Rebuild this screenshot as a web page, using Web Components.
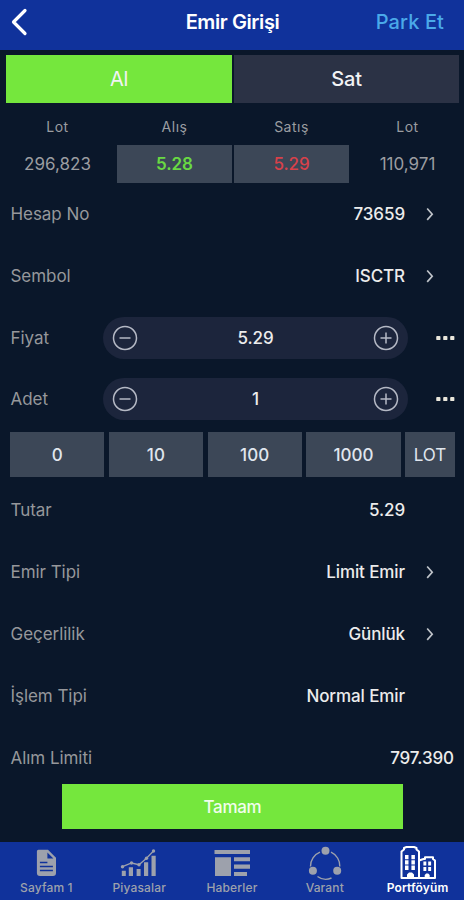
<!DOCTYPE html>
<html lang="tr">
<head>
<meta charset="utf-8">
<title>Emir Girişi</title>
<style>
  body {
    margin: 0;
    background: #0a172a;
    font-family: Inter, "Liberation Sans", sans-serif;
  }
</style>
</head>
<body>
<order-screen></order-screen>

<script>
class AppHeader extends HTMLElement {
  constructor() {
    super();
    this.attachShadow({ mode: "open" });
    this.shadowRoot.innerHTML = `
      <style>
        :host {
          display: grid;
          grid-template-columns: 1fr auto 1fr;
          align-items: center;
          box-sizing: border-box;
          height: 49.5px;
          padding: 0 20px 5px 11px;
          background: #10329b;
          color: #fff;
          font-size: 20px;
        }
        svg { display: block; width: 17px; height: 28px; }
        .title { padding-left: 10px; font-weight: 600; letter-spacing: -0.4px; }
        .action {
          justify-self: end;
          color: #4aa9e9;
          font-weight: 500;
          letter-spacing: 0.1px;
        }
      </style>
      <svg viewBox="0 0 17 28" fill="none" stroke="#fff" stroke-width="3.2" stroke-linecap="round" stroke-linejoin="round"><path d="M14 2.5 2.5 14 14 25.5"/></svg>
      <span class="title"><slot></slot></span>
      <span class="action"><slot name="action"></slot></span>
    `;
  }
}

class SideTabs extends HTMLElement {
  constructor() {
    super();
    this.attachShadow({ mode: "open" });
    this.shadowRoot.innerHTML = `
      <style>
        :host {
          display: grid;
          grid-template-columns: 226px 1fr;
          gap: 2px;
          height: 47.5px;
          margin: 5.5px 5px 0 6px;
        }
        ::slotted(*) {
          display: flex;
          align-items: center;
          justify-content: center;
          background: #2b3245;
          color: #f2f3f5;
          font-size: 20px;
          font-weight: 500;
          letter-spacing: -0.2px;
        }
        ::slotted(.active) {
          background: #75e73d;
          font-weight: 400;
        }
      </style>
      <slot></slot>
    `;
  }
}

class QuoteCell extends HTMLElement {
  constructor() {
    super();
    this.attachShadow({ mode: "open" });
    this.shadowRoot.innerHTML = `
      <style>
        :host {
          display: grid;
          grid-template-rows: 33px 38px;
          color: #9b9da1;
          text-align: center;
        }
        .label { font-size: 14px; line-height: 30px; letter-spacing: 0.5px; }
        .value { font-size: 17px; line-height: 38px; letter-spacing: 0; }
        :host([side]) .value {
          background: #3c4757;
          font-weight: 600;
          letter-spacing: -0.1px;
        }
        :host([side="bid"]) .value { color: #69d943; }
        :host([side="ask"]) .value { color: #d7414a; font-weight: 500; }
      </style>
      <span class="label">${this.getAttribute("label")}</span>
      <span class="value"><slot></slot></span>
    `;
  }
}

class FormRow extends HTMLElement {
  constructor() {
    super();
    this.attachShadow({ mode: "open" });
    this.shadowRoot.innerHTML = `
      <style>
        :host {
          display: grid;
          grid-template-columns: 92.5px 1fr 51px;
          align-items: center;
          box-sizing: border-box;
          height: 50px;
          padding-left: 10.5px;
          padding-right: 8px;
          font-size: 17px;
        }
        .label { color: #96979b; letter-spacing: -0.05px; white-space: nowrap; }
        .value {
          color: #ececec;
          font-weight: 500;
          text-align: right;
          letter-spacing: -0.1px;
        }
        .end { display: flex; }
        svg { display: block; }
        .chevron { width: 10px; height: 16px; margin-left: 20px; }
        .more { width: 22px; height: 8px; margin-left: 27px; }
        :host([wide]) { grid-template-columns: 92.5px 1fr 2px; }
        :host([stepper]) { grid-template-columns: 92.5px 1fr 48px; }
      </style>
      <span class="label">${this.getAttribute("label")}</span>
      <span class="value"><slot></slot></span>
      <span class="end">${this.endIcon()}</span>
    `;
  }
  endIcon() {
    if (this.hasAttribute("link")) {
      return `<svg class="chevron" viewBox="0 0 10 16" fill="none" stroke="#bfc3c9" stroke-width="1.7"><path d="m2.2 2.5 5 5.7-5 5.7"/></svg>`;
    }
    if (this.hasAttribute("stepper")) {
      return `<svg class="more" viewBox="0 0 22 8" fill="#eae7dc"><rect x="1.3" y="1.8" width="4.4" height="4.4" rx="1"/><rect x="8.6" y="1.8" width="4.4" height="4.4" rx="1"/><rect x="15.9" y="1.8" width="4.4" height="4.4" rx="1"/></svg>`;
    }
    return "";
  }
}

class NumberStepper extends HTMLElement {
  constructor() {
    super();
    this.attachShadow({ mode: "open" });
    this.shadowRoot.innerHTML = `
      <style>
        :host {
          display: flex;
          align-items: center;
          justify-content: space-between;
          box-sizing: border-box;
          height: 42px;
          padding: 0 9px;
          border-radius: 21px;
          background: #1c253c;
        }
        svg { flex: none; width: 26px; height: 26px; fill: none; stroke: #b5b9c5; stroke-width: 1.5; }
      </style>
      <svg viewBox="0 0 26 26"><circle cx="13" cy="13" r="11.5"/><path d="M7.5 13h11"/></svg>
      <slot></slot>
      <svg viewBox="0 0 26 26"><circle cx="13" cy="13" r="11.5"/><path d="M7.5 13h11M13 7.5v11"/></svg>
    `;
  }
}

class QuickAmounts extends HTMLElement {
  constructor() {
    super();
    this.attachShadow({ mode: "open" });
    this.shadowRoot.innerHTML = `
      <style>
        :host {
          display: grid;
          grid-template-columns: repeat(4, 1fr) 50px;
          gap: 4.5px;
          height: 44.5px;
          margin: 8px 9px 8.5px 10px;
        }
        ::slotted(*) {
          display: flex;
          align-items: center;
          justify-content: center;
          background: #3c4757;
          color: #e0e6ee;
          font-size: 17px;
          font-weight: 500;
        }
        ::slotted(.unit) { font-weight: 400; }
      </style>
      <slot></slot>
    `;
  }
}

const NAV_ICONS = {
  page: `<path fill-rule="evenodd" d="M14.4 4.700H24l8 8v15.300a3 3 0 0 1-3 3H15.900a3 3 0 0 1-3-3V6.200a1.500 1.500 0 0 1 1.500-1.500ZM23.400 7.500V13.500h6ZM15.900 16.700v1.600h7.500v-1.600ZM15.900 20.700v1.600h13v-1.600ZM15.900 24.700v1.600h13v-1.600Z"/>`,
  market: `<path d="M4.800 25.700h4V31h-4ZM11.800 22.300h4.200V31h-4.200ZM19.600 24h4v7h-4ZM27 17.300h4.200V31H27ZM34.500 10.700h4.200V31h-4.200Z"/><path d="m5.500 21.700 9-3.700 7.500 1.700 7.500-6.400 7-7.300" fill="none" stroke="currentColor" stroke-width="1.300"/><circle cx="5.500" cy="21.700" r="1.700"/><circle cx="14.500" cy="18" r="1.700"/><circle cx="22" cy="19.700" r="1.700"/><circle cx="29.500" cy="13.300" r="1.700"/><circle cx="36.500" cy="6" r="1.700"/>`,
  news: `<path d="M4.500 5H40v4H4.500ZM5 12.300h16V31H5ZM24 12.300h16v4H24ZM24 19.500h16v4.200H24ZM24 27h13v4H24Z"/>`,
  warrant: `<g fill="none" stroke="currentColor" stroke-width="1.400"><path d="M17 7.200A15 15 0 0 0 7.500 21.500"/><path d="M28 7.200A15 15 0 0 1 36.800 21.500"/><path d="M14.500 31.500a14 14 0 0 0 14 1.500"/></g><circle cx="22.500" cy="5.700" r="4"/><circle cx="9.900" cy="25.700" r="4"/><circle cx="34.200" cy="25.700" r="4"/>`,
  portfolio: `<g fill="none" stroke="currentColor" stroke-width="2" stroke-linejoin="round"><path d="M5.500 33V6.500l2.500-2V3l2.500-1H18l2.500 1v1.500l2.500 2V33Z"/><path d="M23 33h16V15.500l-2-1.500v-1.800h-8V14h-1.500l-4.500 1.500"/></g><path d="M9 10h3.500v4.300H9ZM15.400 10h3.500v4.300h-3.500ZM9 15.300h3.500v4.300H9ZM15.400 15.300h3.500v4.300h-3.500ZM9 20.600h3.500v4.300H9ZM15.400 20.600h3.500v4.300h-3.500ZM11 33v-3.500l2-2h3l2 2V33ZM27.400 16.500h2.900v4h-2.900ZM32.200 16.500h2.900v4h-2.900ZM27.400 22h2.900v4h-2.900ZM32.200 22h2.900v4h-2.900ZM28.700 33v-3l1.500-1.500h2l1.500 1.500v3Z"/>`
};

class NavItem extends HTMLElement {
  constructor() {
    super();
    this.attachShadow({ mode: "open" });
    this.shadowRoot.innerHTML = `
      <style>
        :host {
          display: flex;
          flex-direction: column;
          align-items: center;
          padding-top: 3.5px;
          color: #9da1ac;
          font-size: 12px;
          font-weight: 500;
          line-height: 13px;
          letter-spacing: 0.15px;
        }
        :host([active]) { color: #fff; font-weight: 600; }
        svg { width: 44px; height: 36px; fill: currentColor; }
      </style>
      <svg viewBox="0 0 44 36">${NAV_ICONS[this.getAttribute("icon")]}</svg>
      <slot></slot>
    `;
  }
}

class BottomNav extends HTMLElement {
  constructor() {
    super();
    this.attachShadow({ mode: "open" });
    this.shadowRoot.innerHTML = `
      <style>
        :host {
          display: grid;
          grid-template-columns: repeat(5, 1fr);
          height: 58.5px;
          background: #10329b;
        }
      </style>
      <slot></slot>
    `;
  }
}

class OrderScreen extends HTMLElement {
  constructor() {
    super();
    this.attachShadow({ mode: "open" });
    this.shadowRoot.innerHTML = `
      <style>
        :host {
          display: flex;
          flex-direction: column;
          width: 464px;
          height: 900px;
          overflow: hidden;
        }
        .quotes {
          display: grid;
          grid-template-columns: 115px 115px 115px 1fr;
          column-gap: 2px;
          height: 71px;
          margin-top: 9.5px;
        }
        .rows { display: grid; row-gap: 11.8px; }
        .rows.first { margin-top: 6px; }
        .submit {
          display: block;
          width: 341px;
          height: 45px;
          margin: 1.5px 0 0 62px;
          padding: 1px 0 0;
          border: 0;
          background: #75e73d;
          color: #f1fdec;
          font: 500 17px Inter, "Liberation Sans", sans-serif;
          letter-spacing: -0.3px;
        }
        bottom-nav { margin-top: auto; }
      </style>
      <app-header>Emir Girişi<span slot="action">Park Et</span></app-header>
      <side-tabs><span class="active">Al</span><span>Sat</span></side-tabs>
      <div class="quotes">
        <quote-cell label="Lot">296,823</quote-cell>
        <quote-cell label="Alış" side="bid">5.28</quote-cell>
        <quote-cell label="Satış" side="ask">5.29</quote-cell>
        <quote-cell label="Lot">110,971</quote-cell>
      </div>
      <div class="rows first">
        <form-row label="Hesap No" link>73659</form-row>
        <form-row label="Sembol" link>ISCTR</form-row>
        <form-row label="Fiyat" stepper><number-stepper>5.29</number-stepper></form-row>
        <form-row label="Adet" stepper><number-stepper>1</number-stepper></form-row>
      </div>
      <quick-amounts>
        <span>0</span><span>10</span><span>100</span><span>1000</span><span class="unit">LOT</span>
      </quick-amounts>
      <div class="rows">
        <form-row label="Tutar">5.29</form-row>
        <form-row label="Emir Tipi" link>Limit Emir</form-row>
        <form-row label="Geçerlilik" link>Günlük</form-row>
        <form-row label="İşlem Tipi">Normal Emir</form-row>
        <form-row label="Alım Limiti" wide>797.390</form-row>
      </div>
      <button class="submit">Tamam</button>
      <bottom-nav>
        <nav-item icon="page">Sayfam 1</nav-item>
        <nav-item icon="market">Piyasalar</nav-item>
        <nav-item icon="news">Haberler</nav-item>
        <nav-item icon="warrant">Varant</nav-item>
        <nav-item icon="portfolio" active>Portföyüm</nav-item>
      </bottom-nav>
    `;
  }
}

customElements.define("app-header", AppHeader);
customElements.define("side-tabs", SideTabs);
customElements.define("quote-cell", QuoteCell);
customElements.define("form-row", FormRow);
customElements.define("number-stepper", NumberStepper);
customElements.define("quick-amounts", QuickAmounts);
customElements.define("nav-item", NavItem);
customElements.define("bottom-nav", BottomNav);
customElements.define("order-screen", OrderScreen);
</script>
</body>
</html>
